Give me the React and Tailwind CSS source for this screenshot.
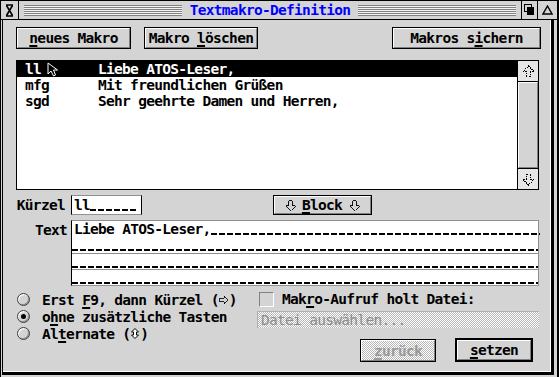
import clsx from 'clsx';

const dither = 'bg-[repeating-conic-gradient(#b8b8b8_0%_25%,#ffffff_0%_50%)] bg-[length:2px_2px]';
const bevel = 'border border-t-white border-l-white border-r-[#808080] border-b-[#808080]';
const blank = 'text-transparent bg-[repeating-linear-gradient(to_right,#000_0px,#000_6px,transparent_6px,transparent_8px)] bg-[length:100%_2px] bg-no-repeat bg-[position:0_12px]';

function U({ children }) {
  return <span className="underline decoration-2 underline-offset-[2px]">{children}</span>;
}

function Btn({ className, def, disabled, children }) {
  return (
    <div className={clsx('flex border-black', def ? 'border-2' : 'border', className)}>
      <div
        className={clsx(
          'flex-1 flex items-center justify-center',
          bevel,
          disabled ? dither + ' text-[#9a9a9a]' : 'bg-[#d4d4d4] text-black'
        )}
      >
        {children}
      </div>
    </div>
  );
}

function OutlineArrow({ dir = 'down', dashed, size = 11 }) {
  const rot = { up: '', down: 'rotate-180', right: 'rotate-90' }[dir];
  return (
    <svg width={size} height={size} viewBox="0 0 12 12" className={clsx('inline-block', rot)}>
      <path
        d="M6 1 L11 6 L8 6 L8 11 L4 11 L4 6 L1 6 Z"
        fill="none"
        stroke="#000"
        strokeWidth="1"
        strokeDasharray={dashed ? '1 1' : undefined}
        shapeRendering="crispEdges"
      />
    </svg>
  );
}

function ArrowBox({ down }) {
  return (
    <div className={clsx('h-[21px] flex items-center justify-center bg-[#e6e6e6]', down ? 'border-t border-black' : 'border-b border-black')}>
      <OutlineArrow dir={down ? 'down' : 'up'} dashed size={13} />
    </div>
  );
}

function Radio({ on, children }) {
  return (
    <div className="h-[17px] flex items-center">
      <div className="w-[13px] h-[13px] rounded-full border border-[#404040] bg-[#d4d4d4] shadow-[inset_1px_1px_0_#ffffff,inset_-1px_-1px_0_#909090] flex items-center justify-center">
        {on && <div className="w-[5px] h-[5px] rounded-full bg-black" />}
      </div>
      <span className="ml-[12px] flex items-center">{children}</span>
    </div>
  );
}

const rows = [
  ['ll', 'Liebe ATOS-Leser,'],
  ['mfg', 'Mit freundlichen Grüßen'],
  ['sgd', 'Sehr geehrte Damen und Herren,'],
];

export default function App() {
  const lines = 'bg-[repeating-linear-gradient(to_bottom,#808080_0px,#808080_1px,#f4f4f4_1px,#f4f4f4_2px)]';
  return (
    <div className="w-[559px] h-[377px] flex flex-col bg-[#d4d4d4] border-l border-r-2 border-black font-['DejaVu_Sans_Mono',monospace] font-bold text-[14.5px] tracking-[-0.7px] leading-[16px] text-black overflow-hidden">
      {/* title bar */}
      <div className="h-[20px] flex border-t border-b border-black">
        <div className="w-[18px] border-r border-black flex items-center justify-center">
          <svg width="9" height="13" viewBox="0 0 9 13">
            <path d="M1 1 H8 M1 12 H8 M1.5 1.5 L7.5 11.5 M7.5 1.5 L1.5 11.5" stroke="#000" strokeWidth="1.6" fill="none" />
          </svg>
        </div>
        <div className="flex-1 flex items-center px-[5px]">
          <div className={clsx('flex-1 h-[11px]', lines)} />
          <div className="px-[8px] text-[#0000ff]">Textmakro-Definition</div>
          <div className={clsx('flex-1 h-[11px]', lines)} />
        </div>
        <div className="w-[16px] border-l border-black flex items-center justify-center">
          <svg width="11" height="12" viewBox="0 0 11 12">
            <rect x="0.5" y="0.5" width="7" height="7" fill="none" stroke="#000" />
            <rect x="3" y="3" width="7" height="8" fill="#000" />
          </svg>
        </div>
        <div className="w-[20px] border-l border-black flex items-center justify-center">
          <svg width="11" height="10" viewBox="0 0 11 10">
            <path d="M5.5 1 L10 9 L1 9 Z" fill="none" stroke="#000" strokeWidth="1.4" />
          </svg>
        </div>
      </div>

      {/* body */}
      <div className="flex-1 flex pb-[2px]">
        <div className="flex-1 ml-[1px] mr-[3px] border-l border-r-[3px] border-b-[3px] border-black shadow-[inset_-1px_-1px_0_#ffffff] pl-[13px] pt-[7px] flex flex-col">
          <div className="flex h-[22px]">
            <Btn className="w-[115px]"><span><U>n</U>eues Makro</span></Btn>
            <Btn className="w-[114px] ml-[13px]"><span>Makro <U>l</U>öschen</span></Btn>
            <Btn className="w-[149px] ml-[134px]"><span>Makros s<U>i</U>chern</span></Btn>
          </div>

          {/* list */}
          <div className="mt-[11px] w-[523px] h-[130px] border border-black bg-white flex">
            <div className="flex-1 relative">
              {rows.map(([k, v], i) => (
                <div key={k} className={clsx('h-[16px] flex items-center pl-[8px]', i === 0 ? 'bg-black text-white' : 'text-black')}>
                  <span className="w-[73px]">{k}</span>
                  <span>{v}</span>
                </div>
              ))}
              <svg className="absolute left-[30px] top-[1px]" width="12" height="15" viewBox="0 0 12 15">
                <path d="M1 1 L1 12 L4 9 L6.5 14 L8.5 13 L6.5 8 L10.5 8 Z" fill="#000" stroke="#fff" strokeWidth="1" />
              </svg>
            </div>
            <div className="w-[21px] border-l border-black flex flex-col">
              <ArrowBox />
              <div className={clsx('flex-1 bg-[#d4d4d4]', bevel)} />
              <ArrowBox down />
            </div>
          </div>

          {/* Kürzel row */}
          <div className="mt-[5px] h-[20px] flex items-center">
            <span className="w-[55px] pr-[6px] text-right">Kürzel</span>
            <div className="w-[71px] h-[20px] bg-white border border-[#909090] border-l-black border-r-black flex items-center pl-[2px] whitespace-pre">
              ll<span className={blank}>______</span>
            </div>
            <Btn className="w-[99px] h-[20px] ml-[131px]">
              <span className="flex items-center">
                <OutlineArrow dir="down" />
                <span className="ml-[6px] mr-[7px]"><U>B</U>lock</span>
                <OutlineArrow dir="down" />
              </span>
            </Btn>
          </div>

          {/* Text row */}
          <div className="mt-[5px] flex">
            <span className="w-[55px] pr-[4px] text-right pt-[2px]">Text</span>
            <div className="w-[468px] h-[66px] bg-white border border-[#909090] border-l-black flex flex-col whitespace-pre">
              <div className="h-[16px] pl-[2px] flex">
                <span>Liebe ATOS-Leser,</span>
                <span className="w-[1px] h-[15px] bg-black" />
                <span className={clsx('flex-1', blank)}>_________________________________________</span>
              </div>
              <div className={clsx('h-[16px] pl-[2px]', blank)}>__________________________________________________________</div>
              <div className={clsx('h-[16px] pl-[2px] border-t border-[#909090]', blank)}>__________________________________________________________</div>
              <div className={clsx('h-[16px] pl-[2px] border-t border-[#909090]', blank)}>__________________________________________________________</div>
            </div>
          </div>

          {/* bottom */}
          <div className="mt-[5px] flex">
            <div className="w-[241px] pl-[1px] flex flex-col">
              <Radio>
                <span>Erst <U>F</U>9, dann Kürzel (</span>
                <OutlineArrow dir="right" size={10} />
                <span>)</span>
              </Radio>
              <Radio on><span>o<U>h</U>ne zusätzliche Tasten</span></Radio>
              <Radio>
                <span>Al<U>t</U>ernate (</span>
                <svg width="8" height="11" viewBox="0 0 8 11" className="mx-[1px]">
                  <path d="M4 0.5 L7.5 4 L5.5 4 L5.5 7 L7.5 7 L4 10.5 L0.5 7 L2.5 7 L2.5 4 L0.5 4 Z" fill="#fff" stroke="#000" strokeWidth="1" />
                </svg>
                <span>)</span>
              </Radio>
            </div>
            <div className="w-[282px] flex flex-col">
              <div className="h-[16px] flex items-center pl-[2px]">
                <div className="w-[15px] h-[15px] bg-[#d4d4d4] border border-t-[#808080] border-l-[#808080] border-b-white border-r-white" />
                <span className="ml-[8px]">Mak<U>r</U>o-Aufruf holt Datei:</span>
              </div>
              <div className={clsx('mt-[4px] h-[17px] flex items-center pl-[3px] font-normal text-[#8c8c8c] border-t border-l border-[#b0b0b0]', dither)}>
                Datei auswählen...
              </div>
              <div className="mt-[11px] flex justify-end pr-[6px]">
                <Btn disabled className="w-[76px] h-[23px]"><span><U>z</U>urück</span></Btn>
                <Btn def className="w-[78px] h-[24px] ml-[19px] -mt-[1px]"><span><U>s</U>etzen</span></Btn>
              </div>
            </div>
          </div>
        </div>
      </div>
    </div>
  );
}
